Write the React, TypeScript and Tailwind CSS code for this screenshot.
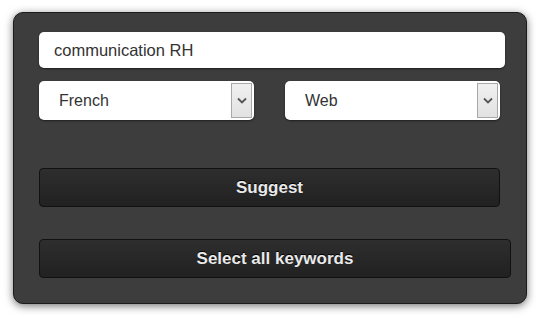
import React from 'react';

// Keyword suggestion panel

function Chevron() {
  return (
    <svg width="10" height="7" viewBox="0 0 10 7" fill="none">
      <path d="M1 1.5 L5 5.5 L9 1.5" stroke="#555" strokeWidth="1.8" />
    </svg>
  );
}

function FakeSelect({ value }: { value: string }) {
  return (
    <div className="relative flex h-[39px] w-[215px] items-center rounded-[5px] bg-white pl-[20px] text-[16px] text-[#333] shadow-[0_1px_2px_rgba(0,0,0,0.5)]">
      {value}
      <div className="absolute right-[2px] top-[2px] flex h-[35px] w-[21px] items-center justify-center border border-[#a8a8a8] bg-gradient-to-b from-[#f0f0f0] to-[#e2e2e2]">
        <Chevron />
      </div>
    </div>
  );
}

function DarkButton({ label, width }: { label: string; width: string }) {
  return (
    <button
      className={`flex h-[39px] ${width} items-center justify-center rounded-[4px] border border-[#111] bg-gradient-to-b from-[#2e2e2e] to-[#212121] pt-[1px] text-[17px] font-bold text-[#eaeaea] [text-shadow:0_-1px_0_#000]`}
    >
      {label}
    </button>
  );
}

export default function App() {
  return (
    <div className="h-[321px] w-[539px] bg-white pl-[13px] pt-[12px] font-['Liberation_Sans',Arial,sans-serif]">
      <div className="flex h-[292px] w-[514px] flex-col rounded-[10px] border border-[#1c1c1c] bg-[#3d3d3d] pl-[25px] pt-[19px] shadow-[0_2px_8px_rgba(0,0,0,0.55)]">
        <div className="flex h-[36px] w-[466px] items-center rounded-[5px] bg-white pl-[15px] text-[16.5px] text-[#333] shadow-[0_1px_2px_rgba(0,0,0,0.5)]">
          communication RH
        </div>
        <div className="mt-[13px] flex gap-[31px]">
          <FakeSelect value="French" />
          <FakeSelect value="Web" />
        </div>
        <div className="mt-[48px]">
          <DarkButton label="Suggest" width="w-[461px]" />
        </div>
        <div className="mt-[32px]">
          <DarkButton label="Select all keywords" width="w-[472px]" />
        </div>
      </div>
    </div>
  );
}
